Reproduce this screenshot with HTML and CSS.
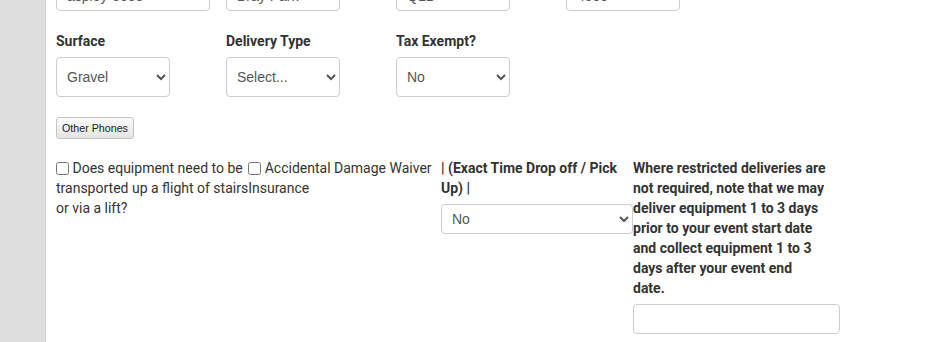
FILE: index.html
```html
<!DOCTYPE html>
<html>
<head>
<meta charset="utf-8">
<link rel="stylesheet" href="styles.css">
</head>
<body>
<div class="page">
  <aside class="sidebar"></aside>
  <main class="content">
    <div class="row top-row">
      <div class="col"><input class="field wide up" type="text" value="aspley-5058"></div>
      <div class="col"><input class="field up" type="text" value="Bray Park"></div>
      <div class="col"><input class="field up" type="text" value="QLD"></div>
      <div class="col"><input class="field up" type="text" value="4500"></div>
    </div>

    <div class="row select-row">
      <div class="col">
        <label class="lbl">Surface</label>
        <select class="field sel"><option>Gravel</option></select>
      </div>
      <div class="col">
        <label class="lbl">Delivery Type</label>
        <select class="field sel"><option>Select...</option></select>
      </div>
      <div class="col">
        <label class="lbl">Tax Exempt?</label>
        <select class="field sel"><option>No</option></select>
      </div>
    </div>

    <div class="btn-row">
      <button class="btn" type="button">Other Phones</button>
    </div>

    <div class="bottom-row">
      <div class="c1">
        <input type="checkbox" class="cb first"> Does equipment need to be <input type="checkbox" class="cb"> Accidental Damage Waiver transported up a flight of stairsInsurance<br>or via a lift?
      </div>
      <div class="c2">
        <label class="lbl">| (Exact Time Drop off / Pick Up) |</label>
        <select class="field sel small"><option>No</option></select>
      </div>
      <div class="c3">
        <label class="lbl note">Where restricted deliveries are not required, note that we may deliver equipment 1 to 3 days prior to your event start date and collect equipment 1 to 3 days after your event end date.</label>
        <input class="field small full" type="text">
      </div>
    </div>
  </main>
</div>
</body>
</html>
```

FILE: styles.css
```css
* { box-sizing: border-box; }
html, body { margin: 0; padding: 0; background: #fff; }
body {
  font-family: Roboto, "Liberation Sans", Arial, sans-serif;
  font-size: 14px;
  line-height: 20px;
  color: #333;
  overflow: hidden;
}
.page { display: flex; height: 342px; }
.sidebar {
  width: 46px;
  flex: none;
  background: #ddd;
  border-right: 1px solid #d2d2d2;
}
.content { flex: 1; padding-left: 10px; }
.row { display: flex; }
.col { width: 170px; flex: none; }
.top-row { margin-top: -29px; }
.field {
  display: block;
  height: 40px;
  width: 114px;
  border: 1px solid #ccc;
  border-radius: 4px;
  background: #fff;
  font-family: "Liberation Sans", Arial, sans-serif;
  font-size: 14px;
  color: #555;
  padding: 6px 10px;
  margin: 0;
}
.field.up { padding: 16px 10px 6px; }
.field.wide { width: 154px; }
.select-row { margin-top: 20px; }
.lbl {
  display: block;
  font-weight: 700;
  margin-bottom: 6px;
  color: #333;
}
.sel { padding: 6px 6px; }
.btn-row { margin-top: 20px; height: 22px; }
.btn {
  font-family: "Liberation Sans", Arial, sans-serif;
  font-size: 10.7px;
  height: 22px;
  width: 78px;
  padding: 0;
  color: #222;
  border: 1px solid #c4c4c4;
  border-radius: 3px;
  background: linear-gradient(#fbfbfb, #e4e4e4);
}
.bottom-row { display: flex; margin-top: 19px; }
.c1 { width: 385px; flex: none; }
.c2 { width: 192px; flex: none; }
.c3 { width: 207px; flex: none; }
.cb {
  width: 13px;
  height: 13px;
  margin: 0 0 0 2px;
  vertical-align: -2px;
}
.cb.first { margin-left: 0; }
.field.small { height: 30px; width: 192px; padding: 4px 6px; }
.field.full { width: 207px; }
.note { width: 193.5px; }
```
